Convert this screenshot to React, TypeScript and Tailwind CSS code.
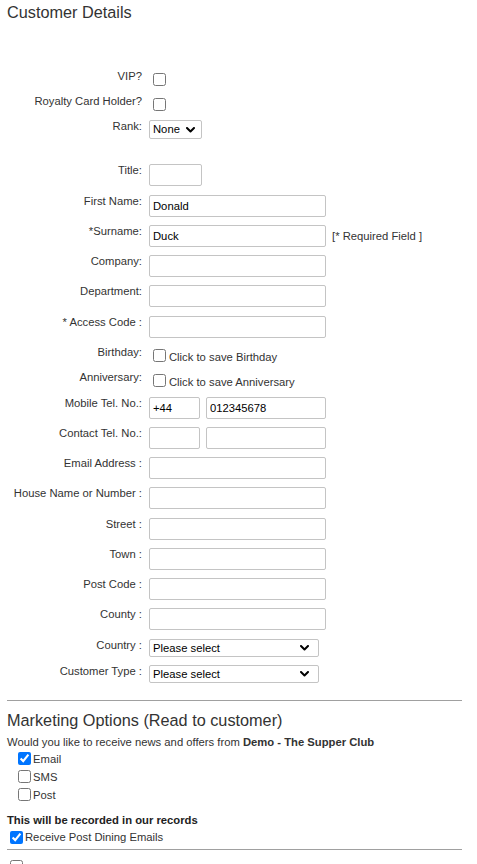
import React from "react"

// Shared text styles
const labelCls = "w-[142px] shrink-0 text-right text-[11.25px] leading-[13px] text-[#333]"
const inputCls =
  "h-[22px] rounded-[2px] border border-[#c4c4c4] bg-white px-[3px] text-[11.25px] text-black outline-none"

function Row({ label, className, children }: { label: string; className: string; children?: React.ReactNode }) {
  return (
    <div className={`flex items-start ${className}`}>
      <div className={labelCls}>{label}</div>
      <div className="ml-[7px] flex items-start">{children}</div>
    </div>
  )
}

function Chevron() {
  return (
    <svg width="9" height="6" viewBox="0 0 9 6" fill="none">
      <polyline points="1,1 4.5,4.5 8,1" stroke="#000" strokeWidth="2" strokeLinecap="round" strokeLinejoin="round" />
    </svg>
  )
}

function Select({ value, className, arrowCls }: { value: string; className: string; arrowCls: string }) {
  return (
    <div className="relative flex">
      <select
        defaultValue={value}
        className={`block appearance-none rounded-[2px] border border-[#c4c4c4] bg-white pl-[3px] text-[11.25px] leading-[13px] text-black outline-none ${className}`}
      >
        <option>{value}</option>
      </select>
      <span className={`pointer-events-none absolute top-1/2 flex -translate-y-1/2 ${arrowCls}`}>
        <Chevron />
      </span>
    </div>
  )
}

function Check({ checked, className }: { checked?: boolean; className: string }) {
  return <input type="checkbox" defaultChecked={checked} className={`m-0 h-[13px] w-[13px] ${className}`} />
}

export default function App() {
  return (
    <div className="min-h-[864px] w-[477px] overflow-hidden bg-white font-['Liberation_Sans',Arial,sans-serif] text-[#333]">
      <div className="px-[7px] pt-[3px]">
        <h2 className="h-[67px] text-[16.25px] leading-[18px] font-normal text-[#333]">Customer Details</h2>
      </div>

      <div className="flex flex-col">
        <Row label="VIP?" className="h-[25px]">
          <Check className="ml-[4px] mt-[3px]" />
        </Row>
        <Row label="Royalty Card Holder?" className="h-[25px]">
          <Check className="ml-[4px] mt-[3px]" />
        </Row>
        <Row label="Rank:" className="h-[44px]">
          <Select value="None" className="h-[19px] w-[53px]" arrowCls="right-[7px]" />
        </Row>
        <Row label="Title:" className="h-[31px]">
          <input className={`${inputCls} w-[53px]`} />
        </Row>
        <Row label="First Name:" className="h-[30px]">
          <input className={`${inputCls} w-[177px]`} defaultValue="Donald" />
        </Row>
        <Row label="*Surname:" className="h-[30px]">
          <input className={`${inputCls} w-[177px]`} defaultValue="Duck" />
          <span className="ml-[6px] mt-[5px] text-[11.25px] leading-[13px] text-[#333]">[* Required Field ]</span>
        </Row>
        <Row label="Company:" className="h-[30px]">
          <input className={`${inputCls} w-[177px]`} />
        </Row>
        <Row label="Department:" className="h-[31px]">
          <input className={`${inputCls} w-[177px]`} />
        </Row>
        <Row label="* Access Code :" className="h-[30px]">
          <input className={`${inputCls} w-[177px]`} />
        </Row>
        <Row label="Birthday:" className="h-[25px]">
          <Check className="ml-[4px] mt-[3px]" />
          <span className="ml-[3px] mt-[5px] text-[11.25px] leading-[13px]">Click to save Birthday</span>
        </Row>
        <Row label="Anniversary:" className="h-[26px]">
          <Check className="ml-[4px] mt-[3px]" />
          <span className="ml-[3px] mt-[5px] text-[11.25px] leading-[13px]">Click to save Anniversary</span>
        </Row>
        <Row label="Mobile Tel. No.:" className="h-[30px]">
          <input className={`${inputCls} w-[51px]`} defaultValue="+44" />
          <input className={`${inputCls} ml-[6px] w-[120px]`} defaultValue="012345678" />
        </Row>
        <Row label="Contact Tel. No.:" className="h-[30px]">
          <input className={`${inputCls} w-[51px]`} />
          <input className={`${inputCls} ml-[6px] w-[120px]`} />
        </Row>
        <Row label="Email Address :" className="h-[30px]">
          <input className={`${inputCls} w-[177px]`} />
        </Row>
        <Row label="House Name or Number :" className="h-[31px]">
          <input className={`${inputCls} w-[177px]`} />
        </Row>
        <Row label="Street :" className="h-[30px]">
          <input className={`${inputCls} w-[177px]`} />
        </Row>
        <Row label="Town :" className="h-[30px]">
          <input className={`${inputCls} w-[177px]`} />
        </Row>
        <Row label="Post Code :" className="h-[30px]">
          <input className={`${inputCls} w-[177px]`} />
        </Row>
        <Row label="County :" className="h-[31px]">
          <input className={`${inputCls} w-[177px]`} />
        </Row>
        <Row label="Country :" className="h-[26px]">
          <Select value="Please select" className="h-[18px] w-[170px]" arrowCls="right-[10px]" />
        </Row>
        <Row label="Customer Type :" className="h-[35px]">
          <Select value="Please select" className="h-[18px] w-[170px]" arrowCls="right-[10px]" />
        </Row>
      </div>

      <div className="px-[7px]">
        <hr className="w-[455px] border-t border-[#a0a0a0]" />

        {/* Marketing Options */}
        <h2 className="mt-[10px] text-[16.25px] leading-[18px] font-normal text-[#333]">Marketing Options (Read to customer)</h2>
        <p className="mt-[7px] text-[11.25px] leading-[13px] text-[#333]">
          Would you like to receive news and offers from <b>Demo - The Supper Club</b>
        </p>
        <div className="flex flex-col">
          {[
            { label: "Email", checked: true },
            { label: "SMS", checked: false },
            { label: "Post", checked: false },
          ].map((opt) => (
            <label key={opt.label} className="flex h-[18px] items-start">
              <Check checked={opt.checked} className="ml-[11px] mt-[3px]" />
              <span className="ml-[2px] mt-[4px] text-[11.25px] leading-[13px]">{opt.label}</span>
            </label>
          ))}
        </div>

        <p className="mt-[11px] text-[11.25px] leading-[13px] font-bold text-[#222]">This will be recorded in our records</p>
        <label className="flex h-[22px] items-start">
          <Check checked className="ml-[3px] mt-[4px]" />
          <span className="ml-[2px] mt-[4px] text-[11.25px] leading-[13px]">Receive Post Dining Emails</span>
        </label>

        <hr className="w-[455px] border-t border-[#a0a0a0]" />
        <div className="mt-[10px] flex">
          <Check className="ml-[3px]" />
        </div>
      </div>
    </div>
  )
}
